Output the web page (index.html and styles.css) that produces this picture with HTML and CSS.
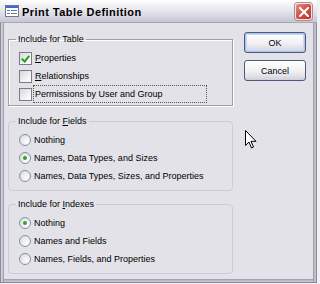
FILE: index.html
```html
<!doctype html>
<html lang="en">
<head>
    <meta charset="UTF-8" />
    <title>Print Table Definition</title>
    <link rel="stylesheet" href="styles.css">
</head>
<body>
<section class="window">
    <header class="titlebar">
        <svg class="app-icon" width="14" height="12" viewBox="0 0 14 12">
            <rect x="0.5" y="0.5" width="13" height="11" fill="#fff" stroke="#6d7a92"/>
            <rect x="1" y="1" width="12" height="2" fill="#3d6bc8"/>
            <rect x="2" y="5" width="3" height="1" fill="#6d7a92"/>
            <rect x="6" y="5" width="6" height="1" fill="#6d7a92"/>
            <rect x="2" y="8" width="3" height="1" fill="#6d7a92"/>
            <rect x="6" y="8" width="6" height="1" fill="#6d7a92"/>
        </svg>
        <span class="title">Print Table Definition</span>
        <a href="javascript:;" class="close">
            <svg width="10" height="10" viewBox="0 0 10 10">
                <path d="M1 1 L9 9 M9 1 L1 9" stroke="#fff" stroke-width="2" stroke-linecap="square"/>
            </svg>
        </a>
    </header>
    <div class="client">
        <div class="groups">
            <fieldset class="group flat">
                <legend>Include for Table</legend>
                <label class="opt"><span class="check on"></span><span class="txt"><u>P</u>roperties</span></label>
                <label class="opt"><span class="check"></span><span class="txt"><u>R</u>elationships</span></label>
                <label class="opt"><span class="check"></span><span class="txt focus">Permissions by User and Group</span></label>
            </fieldset>
            <fieldset class="group">
                <legend>Include for <u>F</u>ields</legend>
                <label class="opt"><span class="radio"></span><span class="txt">Nothing</span></label>
                <label class="opt"><span class="radio on"></span><span class="txt">Names, Data Types, and Sizes</span></label>
                <label class="opt"><span class="radio"></span><span class="txt">Names, Data Types, Sizes, and Properties</span></label>
            </fieldset>
            <fieldset class="group">
                <legend>Include for <u>I</u>ndexes</legend>
                <label class="opt"><span class="radio on"></span><span class="txt">Nothing</span></label>
                <label class="opt"><span class="radio"></span><span class="txt">Names and Fields</span></label>
                <label class="opt"><span class="radio"></span><span class="txt">Names, Fields, and Properties</span></label>
            </fieldset>
        </div>
        <div class="buttons">
            <a href="javascript:;" class="btn default">OK</a>
            <a href="javascript:;" class="btn">Cancel</a>
        </div>
        <svg class="cursor" width="12" height="19" viewBox="0 0 12 19">
            <path d="M0.5 0.5 L0.5 15.5 L4 12 L6.5 18 L8.5 17 L6 11.3 L11 11.3 Z" fill="#fff" stroke="#000" stroke-width="1" stroke-linejoin="miter"/>
        </svg>
    </div>
</section>
</body>
</html>
```

FILE: styles.css
```css
body{
    margin: 0;
    background: #f1f1f3;
    font-family: "Liberation Sans", Arial, sans-serif;
    font-size: 9px;
    color: #000;
}
.window{
    width: 317px;
    height: 283px;
    box-sizing: border-box;
    background: #e3e2e8;
    border: 1px solid #8a8a99;
    border-top: none;
    box-shadow: inset 1px 0 0 #d2d2dc, inset 2px 0 0 #c4c4d0, inset 3px 0 0 #a2a2b0,
                inset -1px 0 0 #c4c4d0, inset -2px 0 0 #b9b9c6, inset -3px 0 0 #a2a2b0,
                inset 0 -1px 0 #c4c4d0, inset 0 -2px 0 #b9b9c6, inset 0 -3px 0 #a2a2b0;
    display: flex;
    flex-direction: column;
}
.titlebar{
    height: 23px;
    margin: 0 -1px;
    box-sizing: border-box;
    display: flex;
    align-items: center;
    padding: 0 4px 0 5px;
    background: linear-gradient(#ffffff, #ececf2 35%, #d9d9e4 70%, #c6c6d4);
    border-bottom: 1px solid #a7a7b6;
}
.app-icon{
    display: block;
    margin-right: 3px;
}
.title{
    flex: 1;
    font-weight: bold;
    font-size: 11px;
    letter-spacing: 0.45px;
    color: #000;
    padding-top: 1px;
}
.close{
    width: 17px;
    height: 17px;
    box-sizing: border-box;
    border: 1px solid #f4e3e3;
    border-radius: 3px;
    background: linear-gradient(135deg, #e98f86, #d1574b 45%, #b8352a);
    box-shadow: 0 0 0 1px #b9868a;
    display: flex;
    align-items: center;
    justify-content: center;
    margin-top: 1px;
    margin-right: 1px;
}
.close svg{
    display: block;
}
.client{
    flex: 1;
    position: relative;
    display: flex;
    padding: 0 0 0 7px;
}
.groups{
    width: 225px;
    flex: none;
    padding-top: 10px;
}
.group{
    min-width: 0;
    margin: 0 0 7px;
    padding: 3px 6px 5px 7px;
    border: 1px solid #cdccd4;
    border-radius: 4px;
}
.group.flat{
    border-radius: 0;
    border-color: #a09fa6;
    box-shadow: 1px 1px 0 #fff, inset 1px 1px 0 #fff;
    padding-bottom: 2px;
    margin-bottom: 9px;
}
legend{
    padding: 0 2px;
    line-height: 13px;
}
.opt{
    display: flex;
    align-items: center;
    height: 18px;
    padding-left: 3px;
}
.check{
    width: 13px;
    height: 13px;
    box-sizing: border-box;
    border: 1px solid #7b7b8a;
    background: linear-gradient(135deg, #d8d8d8, #f6f6f6 70%, #fff);
    margin-right: 1px;
    position: relative;
    flex: none;
}
.check.on::after{
    content: "";
    position: absolute;
    left: 3px;
    top: 1px;
    width: 3px;
    height: 6px;
    border: solid #21a121;
    border-width: 0 2px 2px 0;
    transform: rotate(40deg);
}
.radio{
    width: 12px;
    height: 12px;
    box-sizing: border-box;
    border: 1px solid #8391a8;
    border-radius: 50%;
    background: radial-gradient(circle at 70% 70%, #fff, #e2e2e6 70%, #cfcfd6);
    margin-right: 1px;
    position: relative;
    flex: none;
}
.radio.on::after{
    content: "";
    position: absolute;
    left: 3px;
    top: 3px;
    width: 4px;
    height: 4px;
    border-radius: 50%;
    background: #2ca62c;
}
.txt{
    padding: 1px 1px;
    line-height: 14px;
    border: 1px solid transparent;
    white-space: nowrap;
}
.txt.focus{
    border: 1px dotted #555;
    width: 174px;
    box-sizing: border-box;
}
.buttons{
    padding: 9px 0 0 11px;
    display: flex;
    flex-direction: column;
    gap: 7px;
}
.btn{
    width: 62px;
    height: 21px;
    box-sizing: border-box;
    display: flex;
    align-items: center;
    justify-content: center;
    border: 1px solid #4e5b78;
    border-radius: 3px;
    background: linear-gradient(#ffffff, #f2f2f6 50%, #dddde6 85%, #cfcfda);
    color: #000;
    text-decoration: none;
}
.btn.default{
    box-shadow: inset 0 0 0 1px #a9c3ee, inset 0 0 0 2px #c9d9f5;
}
.cursor{
    position: absolute;
    left: 244px;
    top: 107px;
}
```
